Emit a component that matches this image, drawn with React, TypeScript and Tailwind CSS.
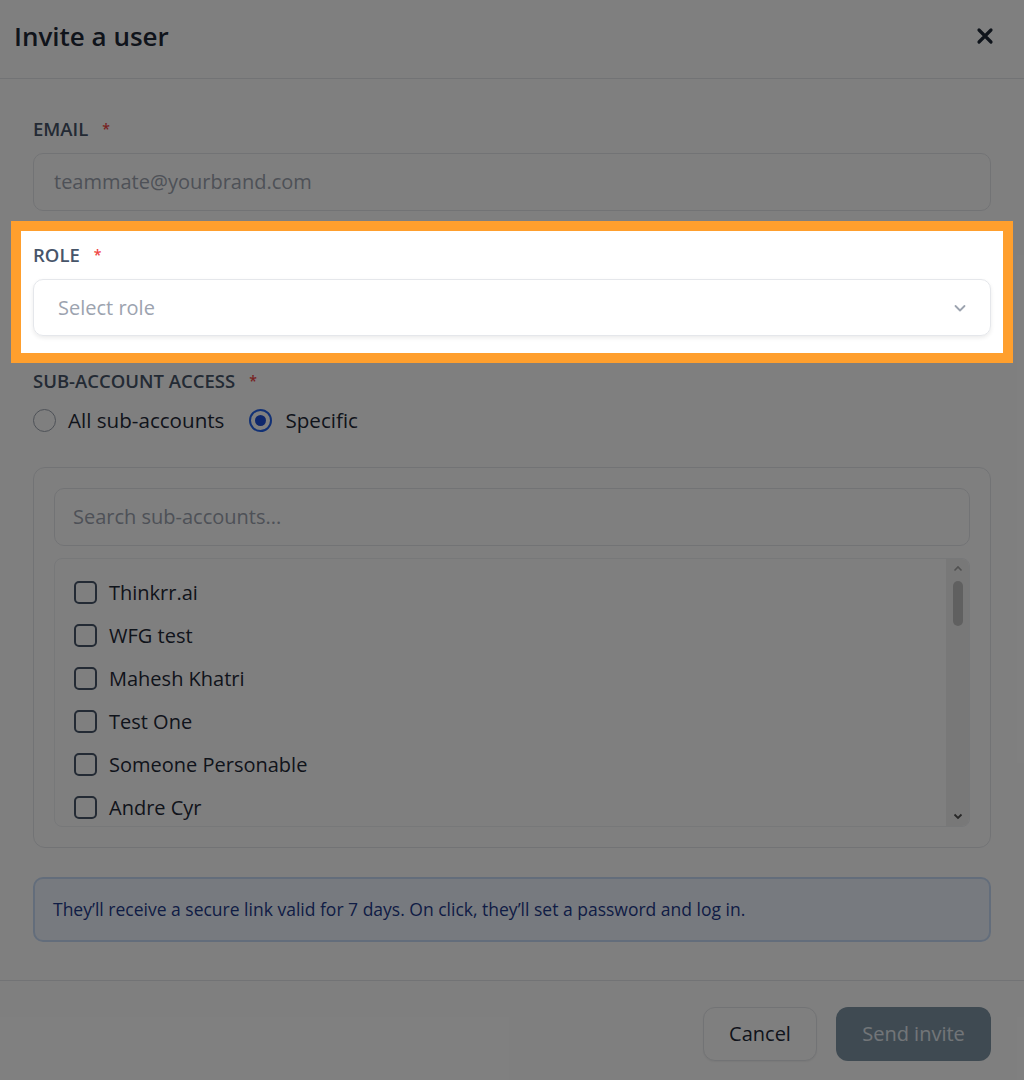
import React from "react";

const accounts = [
  "Thinkrr.ai",
  "WFG test",
  "Mahesh Khatri",
  "Test One",
  "Someone Personable",
  "Andre Cyr",
];

const Label = ({ text }: { text: string }) => (
  <div className="flex items-center gap-[14px] text-[18.5px] font-semibold uppercase leading-[22px] text-[#475569]">
    <span>{text}</span>
    <span className="text-[14px] text-[#ef4444]">*</span>
  </div>
);

export default function App() {
  return (
    <div
      className="relative h-[1080px] w-[1024px] overflow-hidden bg-white"
      style={{ fontFamily: '"Open Sans", "Noto Sans", sans-serif' }}
    >
      {/* header */}
      <div className="flex h-[79px] items-center justify-between border-b border-[#e5e7eb] pb-[6px] pl-[14px] pr-[30px]">
        <h1 className="text-[26px] font-semibold text-[#1f2937]">Invite a user</h1>
        <svg width="18" height="18" viewBox="0 0 18 18" className="text-[#1f2937]">
          <path d="M3 3 L15 15 M15 3 L3 15" stroke="currentColor" strokeWidth="3.2" strokeLinecap="round" />
        </svg>
      </div>

      {/* body */}
      <div className="flex flex-col px-[33px] pt-[39px]">
        <div className="flex flex-col gap-[13px]">
          <Label text="Email" />
          <div className="flex h-[58px] items-center rounded-[10px] border border-[#e5e7eb] px-[20px] text-[20px] text-[#9ca3af]">
            teammate@yourbrand.com
          </div>
        </div>

        {/* highlighted role field */}
        <div className="relative z-20 -mx-[12px] mt-[20px] flex flex-col gap-[13px] bg-white px-[12px] pb-[17px] pt-[13px] outline-[10px] outline-[#ff9f2d]">
          <Label text="Role" />
          <div className="flex h-[57px] items-center justify-between rounded-[10px] border border-[#e5e7eb] pl-[24px] pr-[22px] text-[20px] text-[#9ca3af] shadow-[0_2px_4px_rgba(0,0,0,0.08)]">
            <span>Select role</span>
            <svg width="16" height="16" viewBox="0 0 16 16" className="text-[#9ca3af]">
              <path d="M3.5 6 L8 10.5 L12.5 6" fill="none" stroke="currentColor" strokeWidth="1.8" strokeLinecap="round" strokeLinejoin="round" />
            </svg>
          </div>
        </div>

        <div className="mt-[17px] flex flex-col">
          <Label text="Sub-account access" />
          <div className="mt-[13px] flex items-center text-[20.6px] text-[#1f2937]">
            <span className="h-[23px] w-[23px] rounded-full border-[1.5px] border-[#9ca3af]" />
            <span className="ml-[12px]">All sub-accounts</span>
            <span className="ml-[25px] flex h-[23px] w-[23px] items-center justify-center rounded-full border-2 border-[#2563eb]">
              <span className="h-[11px] w-[11px] rounded-full bg-[#1d4ed8]" />
            </span>
            <span className="ml-[13px]">Specific</span>
          </div>

          <div className="mt-[31px] flex h-[381px] flex-col rounded-[12px] border border-[#e5e7eb] p-[20px]">
            <div className="flex h-[58px] shrink-0 items-center rounded-[10px] border border-[#e5e7eb] px-[18px] text-[20px] text-[#9ca3af]">
              Search sub-accounts...
            </div>
            <div className="mt-[12px] flex h-[272px] overflow-hidden rounded-[8px] border border-[#eef0f3]">
              <div className="flex flex-1 flex-col gap-[19px] overflow-hidden pl-[19px] pt-[22px]">
                {accounts.map((a) => (
                  <div key={a} className="flex h-[24px] shrink-0 items-center gap-[12px] text-[20px] text-[#1f2937]">
                    <span className="h-[23px] w-[23px] rounded-[5px] border-2 border-[#475569]" />
                    <span>{a}</span>
                  </div>
                ))}
              </div>
              {/* scrollbar */}
              <div className="flex w-[23px] flex-col items-center bg-[#f1f1f1] pt-[6px] pb-[6px]">
                <svg width="10" height="8" viewBox="0 0 10 8" className="text-[#a3a3a3]">
                  <path d="M1.5 5.5 L5 2 L8.5 5.5" fill="none" stroke="currentColor" strokeWidth="1.6" />
                </svg>
                <div className="mt-[8px] h-[45px] w-[10px] rounded-full bg-[#c1c1c1]" />
                <div className="flex-1" />
                <svg width="10" height="8" viewBox="0 0 10 8" className="text-[#505050]">
                  <path d="M1.5 2.5 L5 6 L8.5 2.5" fill="none" stroke="currentColor" strokeWidth="1.8" />
                </svg>
              </div>
            </div>
          </div>

          <div className="mt-[29px] flex h-[65px] items-center rounded-[10px] border-2 border-[#c7dbf7] bg-[#eef5ff] px-[18px] text-[17.5px] text-[#1e3a8a]">
            They&rsquo;ll receive a secure link valid for 7 days. On click, they&rsquo;ll set a password and log in.
          </div>
        </div>
      </div>

      {/* footer */}
      <div className="absolute inset-x-0 top-[980px] flex justify-end gap-[19px] border-t border-[#e5e7eb] px-[33px] pt-[26px]">
        <button className="h-[54px] w-[114px] rounded-[12px] border border-[#e5e7eb] bg-white text-[20px] font-medium text-[#1f2937] shadow-[0_1px_2px_rgba(0,0,0,0.06)]">
          Cancel
        </button>
        <button className="h-[54px] w-[155px] rounded-[12px] bg-[#7f95a5] text-[20px] font-medium text-[#e4ebf1]">
          Send invite
        </button>
      </div>

      {/* dimming overlay */}
      <div className="absolute inset-0 z-10 bg-black/50" />
    </div>
  );
}
